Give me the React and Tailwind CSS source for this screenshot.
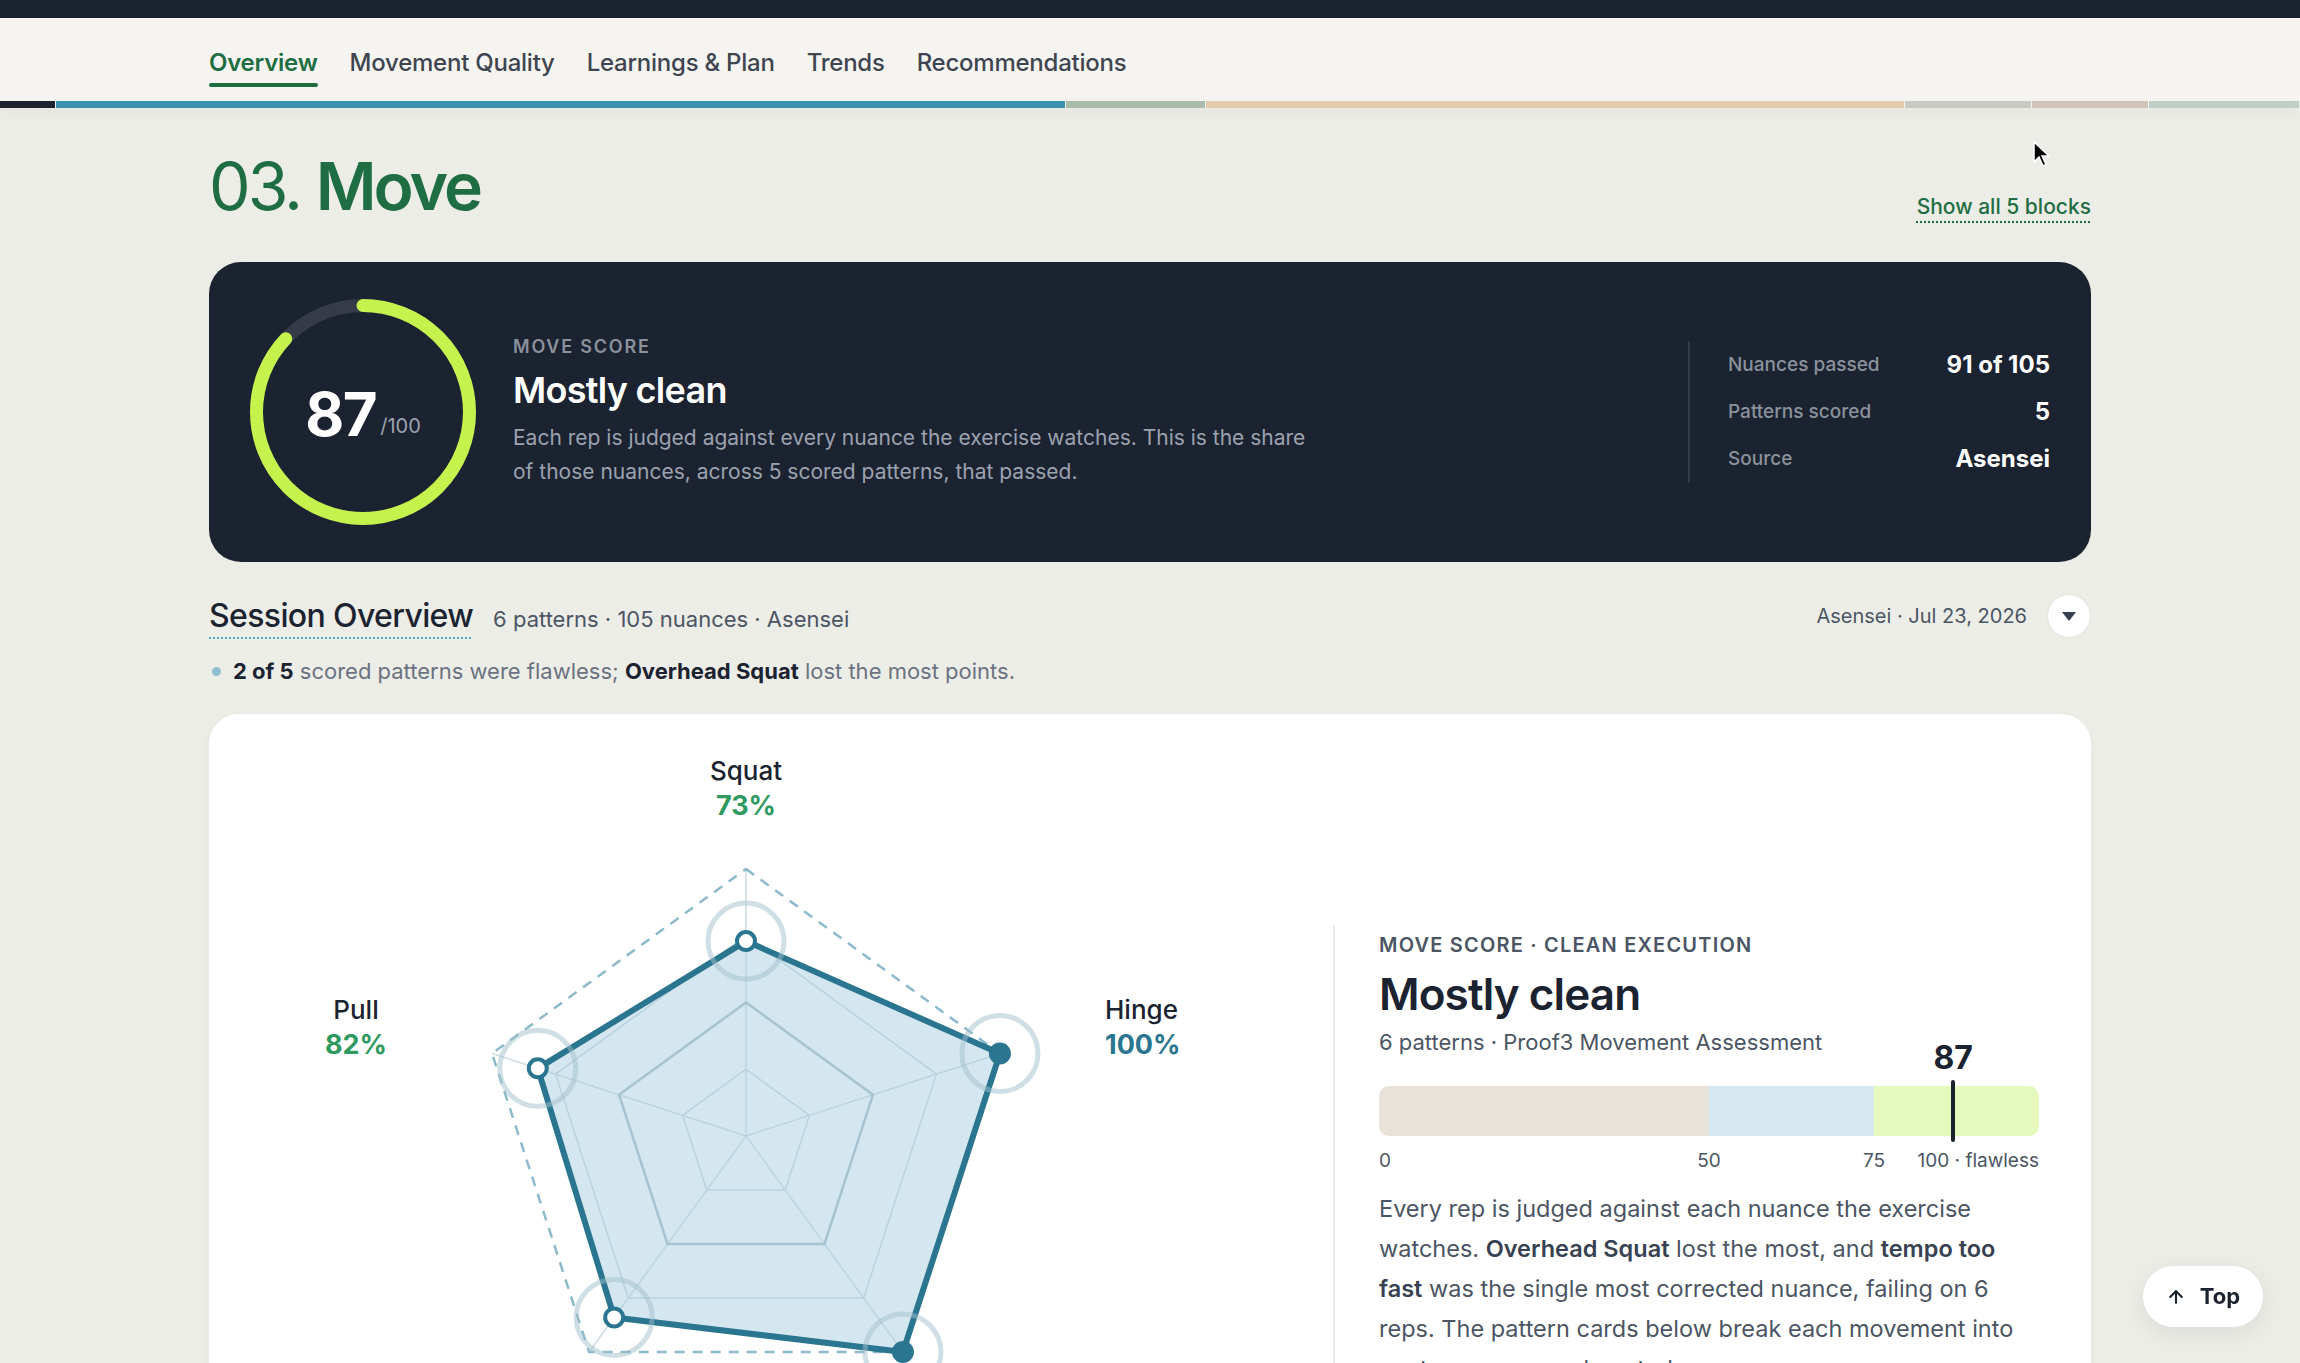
import { ArrowUp } from 'lucide-react';

const tabs = ['Overview', 'Movement Quality', 'Learnings & Plan', 'Trends', 'Recommendations'];

const strip = [
  { w: 56, c: 'bg-[#1b2230]' },
  { w: 1010, c: 'bg-[#3a8fae]' },
  { w: 140, c: 'bg-[#a9bba9]' },
  { w: 699, c: 'bg-[#e2cbad]' },
  { w: 127, c: 'bg-[#c9c9c3]' },
  { w: 117, c: 'bg-[#d2c3b8]' },
  { w: 151, c: 'bg-[#c0cfc6]' },
];

function ScoreRing({ value }) {
  const r = 106.5;
  const circ = 2 * Math.PI * r;
  return (
    <div className="relative w-[226px] h-[226px] shrink-0">
      <svg width="226" height="226" viewBox="0 0 226 226" className="-rotate-90">
        <circle cx="113" cy="113" r={r} fill="none" stroke="#353c48" strokeWidth="13" />
        <circle
          cx="113"
          cy="113"
          r={r}
          fill="none"
          stroke="#c6f24e"
          strokeWidth="13"
          strokeLinecap="round"
          strokeDasharray={`${(circ * value) / 100} ${circ}`}
        />
      </svg>
      <div className="absolute inset-0 flex items-center justify-center pt-1">
        <span className="text-[60px] font-bold text-white leading-none tracking-tight">{value}</span>
        <span className="text-[20px] text-[#9ca3af] ml-1 mt-6">/100</span>
      </div>
    </div>
  );
}

function Radar() {
  const cx = 537;
  const cy = 422;
  const R = 267;
  const angles = [-90, -18, 54, 126, 198];
  const values = [0.73, 1, 1, 0.84, 0.82];
  const pt = (i, k) => {
    const a = (angles[i] * Math.PI) / 180;
    return [cx + R * k * Math.cos(a), cy + R * k * Math.sin(a)];
  };
  const ring = (k) => angles.map((_, i) => pt(i, k).join(',')).join(' ');
  const data = values.map((v, i) => pt(i, v).join(',')).join(' ');

  return (
    <svg width="1124" height="740" viewBox="0 0 1124 740" className="block">
      {/* grid */}
      {angles.map((_, i) => {
        const [x, y] = pt(i, 1);
        return <line key={i} x1={cx} y1={cy} x2={x} y2={y} stroke="#cddbe1" strokeWidth="1.5" />;
      })}
      <polygon points={ring(0.25)} fill="none" stroke="#c6d6dd" strokeWidth="1.5" />
      <polygon points={ring(0.75)} fill="none" stroke="#c6d6dd" strokeWidth="1.5" />
      <polygon points={ring(0.5)} fill="none" stroke="#a3b9c3" strokeWidth="2.5" />
      <polygon points={ring(1)} fill="none" stroke="#8dbacb" strokeWidth="2.5" strokeDasharray="10 8" />

      {/* data */}
      <polygon points={data} fill="#a9cde0" fillOpacity="0.5" stroke="#2a7590" strokeWidth="6" strokeLinejoin="round" />
      {values.map((v, i) => {
        const [x, y] = pt(i, v);
        return <circle key={'h' + i} cx={x} cy={y} r="38" fill="none" stroke="#9fbfcc" strokeOpacity="0.5" strokeWidth="5" />;
      })}
      {values.map((v, i) => {
        const [x, y] = pt(i, v);
        return v >= 1 ? (
          <circle key={'p' + i} cx={x} cy={y} r="11" fill="#2a7590" />
        ) : (
          <circle key={'p' + i} cx={x} cy={y} r="9" fill="#ffffff" stroke="#2a7590" strokeWidth="4" />
        );
      })}

      {/* labels */}
      <text x={cx} y="66" textAnchor="middle" fontSize="26" fontWeight="500" fill="#1b2230">Squat</text>
      <text x={cx} y="101" textAnchor="middle" fontSize="27" fontWeight="700" fill="#2f9a5f">73%</text>
      <text x="147" y="305" textAnchor="middle" fontSize="26" fontWeight="500" fill="#1b2230">Pull</text>
      <text x="147" y="340" textAnchor="middle" fontSize="27" fontWeight="700" fill="#2f9a5f">82%</text>
      <text x="896" y="305" fontSize="26" fontWeight="500" fill="#1b2230">Hinge</text>
      <text x="896" y="340" fontSize="27" fontWeight="700" fill="#2a7590">100%</text>
    </svg>
  );
}

export default function App() {
  return (
    <div className="min-h-screen bg-[#edede8] font-['Inter',sans-serif] text-[#1b2230]">
      {/* top bar */}
      <div className="h-[18px] bg-[#1b2230]" />

      {/* tabs */}
      <div className="bg-[#f6f4f0]">
        <nav className="max-w-[1882px] mx-auto flex gap-8 h-[83px] items-start pt-[33px]">
          {tabs.map((t, i) => (
            <a
              key={t}
              href="#"
              className={`relative text-[24px] leading-none tracking-[-0.01em] ${
                i === 0 ? 'font-semibold text-[#1f6e43]' : 'font-medium text-[#3f4550]'
              }`}
            >
              {t}
              {i === 0 && <span className="absolute left-0 right-0 top-[32px] h-[4px] rounded-full bg-[#1f6e43]" />}
            </a>
          ))}
        </nav>
      </div>
      <div className="flex h-[7px] shadow-[0_6px_14px_rgba(0,0,0,0.05)]">
        {strip.map((s, i) => (
          <div key={i} className={`${s.c} border-r border-[#f6f4f0]`} style={{ width: s.w }} />
        ))}
      </div>

      <main className="max-w-[1882px] mx-auto relative">
        {/* mouse pointer */}
        <svg className="absolute left-[1823px] top-[32px]" width="18" height="28" viewBox="0 0 18 28">
          <path d="M2 2 L2 22 L7 17 L11 26 L14 24.5 L10 16 L17 16 Z" fill="#000" stroke="#fff" strokeWidth="1.5" />
        </svg>

        {/* heading */}
        <div className="flex items-end justify-between pt-[45px] pb-[43px]">
          <h1 className="text-[66px] leading-none text-[#1f6e43] tracking-[-0.045em]">
            <span className="font-normal">03.</span> <span className="font-semibold">Move</span>
          </h1>
          <a
            href="#"
            className="text-[21px] font-medium text-[#1f6e43] underline decoration-dotted decoration-[#1f6e43] underline-offset-[8px] -mb-[3px]"
          >
            Show all 5 blocks
          </a>
        </div>

        {/* score card */}
        <section className="h-[300px] rounded-[32px] bg-[#1b2230] flex items-center px-[41px]">
          <ScoreRing value={87} />
          <div className="ml-[37px] flex-1 pb-[2px]">
            <div className="text-[18px] font-semibold tracking-[0.1em] text-[#8b929c]">MOVE SCORE</div>
            <div className="mt-[3px] text-[36px] font-semibold text-white tracking-[-0.02em]">Mostly clean</div>
            <p className="mt-[4px] max-w-[795px] text-[21px] leading-[34px] text-[#9ca3af]">
              Each rep is judged against every nuance the exercise watches. This is the share of those nuances, across 5
              scored patterns, that passed.
            </p>
          </div>
          <div className="w-[362px] border-l-2 border-[#343b46] pl-[38px] py-[10px] flex flex-col gap-[19px]">
            {[
              ['Nuances passed', '91 of 105'],
              ['Patterns scored', '5'],
              ['Source', 'Asensei'],
            ].map(([k, v]) => (
              <div key={k} className="flex items-center justify-between leading-[28px]">
                <span className="text-[19px] font-medium text-[#8b929c]">{k}</span>
                <span className="text-[24px] font-bold text-white">{v}</span>
              </div>
            ))}
          </div>
        </section>

        {/* session overview */}
        <div className="mt-[30px] flex items-center justify-between">
          <div className="flex items-baseline gap-[20px]">
            <h2 className="text-[32px] font-medium tracking-[-0.02em] text-[#1b2230] underline decoration-dotted decoration-[#5aa9c0] decoration-2 underline-offset-[10px]">
              Session Overview
            </h2>
            <span className="text-[22px] text-[#4b5563]">6 patterns · 105 nuances · Asensei</span>
          </div>
          <div className="flex items-center gap-[20px]">
            <span className="text-[20px] text-[#4b5563]">Asensei · Jul 23, 2026</span>
            <button className="w-[44px] h-[44px] rounded-full bg-white border border-[#e6e1d9] flex items-center justify-center">
              <svg width="16" height="11" viewBox="0 0 16 11">
                <path d="M1 1 H15 L8 10 Z" fill="#374151" />
              </svg>
            </button>
          </div>
        </div>
        <div className="mt-[15px] flex items-center gap-[12px] text-[22px] text-[#6b7280]">
          <span className="w-[9px] h-[9px] rounded-full bg-[#8fc0d2] ml-[3px]" />
          <span>
            <b className="font-bold text-[#1b2230]">2 of 5</b> scored patterns were flawless;{' '}
            <b className="font-bold text-[#1b2230]">Overhead Squat</b> lost the most points.
          </span>
        </div>

        {/* radar card */}
        <section className="mt-[26px] rounded-[30px] bg-white shadow-[0_2px_10px_rgba(0,0,0,0.03)] flex">
          <div className="w-[1124px] shrink-0">
            <Radar />
          </div>
          <div className="mt-[211px] border-l-2 border-[#ebebea] pl-[44px] pr-[52px] pt-[5px] flex-1 mb-10">
            <div className="text-[20px] font-semibold tracking-[0.06em] text-[#4b5563]">MOVE SCORE · CLEAN EXECUTION</div>
            <div className="mt-[7px] text-[44px] font-semibold tracking-[-0.02em] text-[#1b2230] leading-tight">Mostly clean</div>
            <div className="mt-[4px] text-[22px] text-[#4b5563]">6 patterns · Proof3 Movement Assessment</div>

            <div className="relative mt-[27px] h-[50px] flex">
              <div className="w-1/2 bg-[#e8e2da] rounded-l-[10px]" />
              <div className="w-1/4 bg-[#d5e7ef]" />
              <div className="w-1/4 bg-[#e5f9bd] rounded-r-[10px]" />
              <span className="absolute left-[87%] -translate-x-1/2 bottom-[calc(100%+12px)] text-[32px] font-bold leading-none text-[#1b2230]">
                87
              </span>
              <span className="absolute left-[87%] -translate-x-1/2 -top-[6px] -bottom-[6px] w-[4px] rounded-full bg-[#1b2230]" />
            </div>
            <div className="relative h-[30px] mt-[11px] text-[19px] text-[#4b5563]">
              <span className="absolute left-0">0</span>
              <span className="absolute left-1/2 -translate-x-1/2">50</span>
              <span className="absolute left-3/4 -translate-x-1/2">75</span>
              <span className="absolute right-0">100 · flawless</span>
            </div>

            <p className="mt-[12px] text-[23.5px] leading-[40px] text-[#4b5563]">
              Every rep is judged against each nuance the exercise watches.{' '}
              <b className="font-semibold text-[#374151]">Overhead Squat</b> lost the most, and{' '}
              <b className="font-semibold text-[#374151]">tempo too fast</b> was the single most corrected nuance, failing on
              6 reps. The pattern cards below break each movement into posture, range and control.
            </p>
          </div>
        </section>
        <div className="h-20" />
      </main>

      {/* back to top */}
      <button className="fixed right-[37px] bottom-[36px] h-[61px] w-[120px] rounded-full bg-white shadow-[0_6px_24px_rgba(0,0,0,0.08)] flex items-center justify-center gap-[14px] text-[22px] font-bold text-[#1b2230]">
        <ArrowUp size={20} strokeWidth={2.5} />
        Top
      </button>
    </div>
  );
}
